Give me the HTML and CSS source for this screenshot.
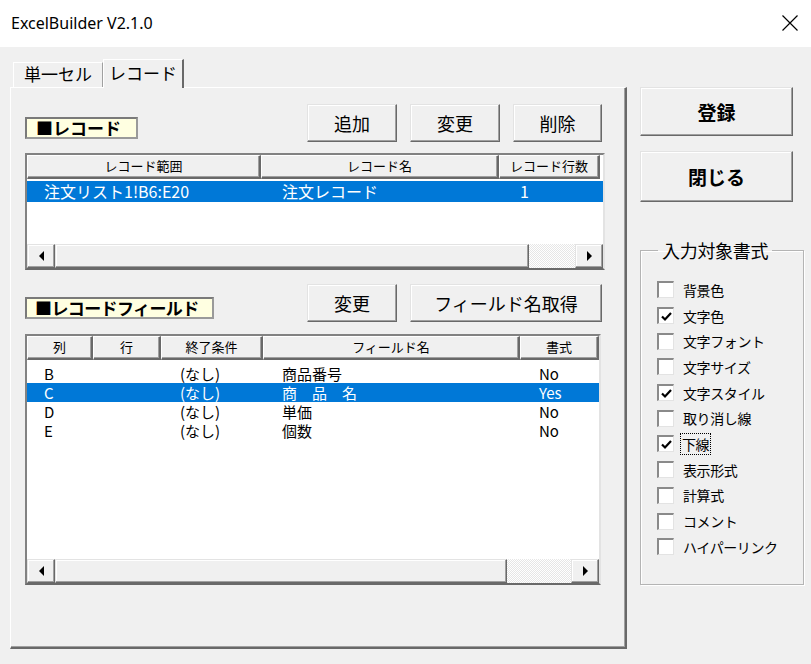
FILE: index.html
```html
<!DOCTYPE html>
<html>
  <head>
    <meta charset="utf-8">
    <title>ExcelBuilder V2.1.0</title>
    <link rel="stylesheet" href="styles.css">
  </head>
  <body>
    <div class="titlebar">
      <span class="title">ExcelBuilder V2.1.0</span>
      <svg class="close" width="16" height="16" viewBox="0 0 16 16">
        <path d="M0.5 0.5 L15.5 15.5 M15.5 0.5 L0.5 15.5" stroke="#000" stroke-width="1.2" fill="none"/>
      </svg>
    </div>
    <div class="client">
      <div class="left">
        <div class="tabs">
          <div class="tab">単一セル</div>
          <div class="tab active">レコード</div>
        </div>
        <div class="panel">
          <div class="sec-head">
            <div class="sec-label">■レコード</div>
            <div class="btns">
              <button class="btn w90">追加</button>
              <button class="btn w90">変更</button>
              <button class="btn w89">削除</button>
            </div>
          </div>
          <div class="list list-rec">
            <div class="lv-head">
              <div class="hd">レコード範囲</div>
              <div class="hd">レコード名</div>
              <div class="hd">レコード行数</div>
            </div>
            <div class="lv-body">
              <div class="lv-row sel">
                <div class="cell">注文リスト1!B6:E20</div>
                <div class="cell">注文レコード</div>
                <div class="cell">1</div>
              </div>
            </div>
            <div class="hscroll">
              <div class="sb-btn"><span class="arr-l"></span></div>
              <div class="sb-thumb"></div>
              <div class="sb-track"></div>
              <div class="sb-btn"><span class="arr-r"></span></div>
            </div>
          </div>

          <div class="sec-head sec2">
            <div class="sec-label wide">■レコードフィールド</div>
            <div class="btns">
              <button class="btn w90">変更</button>
              <button class="btn w192">フィールド名取得</button>
            </div>
          </div>
          <div class="list list-fld">
            <div class="lv-head">
              <div class="hd">列</div>
              <div class="hd">行</div>
              <div class="hd">終了条件</div>
              <div class="hd">フィールド名</div>
              <div class="hd">書式</div>
            </div>
            <div class="lv-body">
              <div class="lv-row">
                <div class="cell">B</div>
                <div class="cell"></div>
                <div class="cell">(なし)</div>
                <div class="cell">商品番号</div>
                <div class="cell">No</div>
              </div>
              <div class="lv-row sel">
                <div class="cell">C</div>
                <div class="cell"></div>
                <div class="cell">(なし)</div>
                <div class="cell">商　品　名</div>
                <div class="cell">Yes</div>
              </div>
              <div class="lv-row">
                <div class="cell">D</div>
                <div class="cell"></div>
                <div class="cell">(なし)</div>
                <div class="cell">単価</div>
                <div class="cell">No</div>
              </div>
              <div class="lv-row">
                <div class="cell">E</div>
                <div class="cell"></div>
                <div class="cell">(なし)</div>
                <div class="cell">個数</div>
                <div class="cell">No</div>
              </div>
            </div>
            <div class="hscroll">
              <div class="sb-btn"><span class="arr-l"></span></div>
              <div class="sb-thumb"></div>
              <div class="sb-track"></div>
              <div class="sb-btn"><span class="arr-r"></span></div>
            </div>
          </div>
        </div>
      </div>

      <div class="right">
        <button class="btn big">登録</button>
        <button class="btn big close-btn">閉じる</button>
        <fieldset class="group">
          <legend>入力対象書式</legend>
          <div class="checks">
            <div class="chk"><span class="box"></span><span>背景色</span></div>
            <div class="chk"><span class="box"><svg width="13" height="13" viewBox="0 0 13 13"><path d="M2 6.5 L5 9.5 L11 3" stroke="#000" stroke-width="2.2" fill="none"/></svg></span><span>文字色</span></div>
            <div class="chk"><span class="box"></span><span>文字フォント</span></div>
            <div class="chk"><span class="box"></span><span>文字サイズ</span></div>
            <div class="chk"><span class="box"><svg width="13" height="13" viewBox="0 0 13 13"><path d="M2 6.5 L5 9.5 L11 3" stroke="#000" stroke-width="2.2" fill="none"/></svg></span><span>文字スタイル</span></div>
            <div class="chk"><span class="box"></span><span>取り消し線</span></div>
            <div class="chk"><span class="box"><svg width="13" height="13" viewBox="0 0 13 13"><path d="M2 6.5 L5 9.5 L11 3" stroke="#000" stroke-width="2.2" fill="none"/></svg></span><span class="focus">下線</span></div>
            <div class="chk"><span class="box"></span><span>表示形式</span></div>
            <div class="chk"><span class="box"></span><span>計算式</span></div>
            <div class="chk"><span class="box"></span><span>コメント</span></div>
            <div class="chk"><span class="box"></span><span>ハイパーリンク</span></div>
          </div>
        </fieldset>
      </div>
    </div>
  </body>
</html>
```

FILE: styles.css
```css
* {
    box-sizing: border-box;
}

body {
    margin: 0;
    width: 811px;
    height: 664px;
    overflow: hidden;
    background-color: #f0f0f0;
    font-family: "Noto Sans CJK JP", sans-serif;
    color: #000;
}

.titlebar {
    height: 47px;
    background-color: #fff;
    display: flex;
    align-items: center;
    justify-content: space-between;
    padding: 0 12px 2px 11px;
}
.title {
    font-family: "Noto Sans", sans-serif;
    font-size: 16px;
}
.close {
    margin-right: 1px;
}

.client {
    display: flex;
    padding-top: 12px;
}
.left {
    width: 617px;
    margin-left: 10px;
}

.tabs {
    display: flex;
    height: 28px;
    align-items: flex-end;
}
.tab {
    font-size: 17px;
    line-height: 22px;
    height: 25px;
    width: 90px;
    margin-left: 3px;
    text-align: center;
    background-color: #f0f0f0;
    border-top: 1px solid #fff;
    border-left: 1px solid #fff;
    border-right: 1px solid #a0a0a0;
}
.tab.active {
    width: 81px;
    height: 29px;
    margin-left: 0;
    margin-bottom: -1px;
    padding-top: 2px;
    position: relative;
    z-index: 1;
    border-right: 2px solid #696969;
}

.panel {
    height: 562px;
    border-top: 1px solid #fff;
    border-left: 1px solid #fff;
    border-right: 2px solid #696969;
    border-bottom: 2px solid #696969;
    box-shadow: inset -1px -1px #a0a0a0;
    padding: 16px 20px 0 14px;
}

.sec-head {
    display: flex;
    justify-content: space-between;
    align-items: flex-start;
    height: 38px;
    padding-right: 3px;
}
.sec2 {
    margin-top: 14px;
}
.sec-label {
    margin-top: 13px;
    width: 113px;
    height: 22px;
    display: flex;
    align-items: center;
    background-color: #ffffe1;
    border: 2px solid #9a9a9a;
    border-top-color: #7a7a7a;
    border-left-color: #7a7a7a;
    font-size: 17px;
    font-weight: bold;
    line-height: 18px;
    padding-left: 9px;
    white-space: nowrap;
}
.sec-label.wide {
    width: 189px;
    padding-left: 8px;
    letter-spacing: -0.6px;
}
.btns {
    display: flex;
    gap: 13px;
}

.btn {
    font-family: "Noto Sans CJK JP", sans-serif;
    font-size: 18px;
    height: 38px;
    padding: 0;
    background-color: #f0f0f0;
    color: #000;
    border: 1px solid;
    border-color: #e3e3e3 #696969 #696969 #e3e3e3;
    box-shadow: inset -1px -1px #a0a0a0, inset 1px 1px #fff;
}
.w90 { width: 90px; }
.w89 { width: 89px; }
.w192 { width: 192px; }

.list {
    display: flex;
    flex-direction: column;
    background-color: #fff;
    border: 2px solid #828282;
    border-right-color: #e3e3e3;
    border-bottom-color: #696969;
    overflow: hidden;
}
.list-rec {
    margin-top: 11px;
    width: 580px;
    height: 117px;
}
.list-fld {
    margin-top: 12px;
    width: 576px;
    height: 251px;
}

.lv-head, .lv-row {
    display: grid;
}
.list-rec .lv-head, .list-rec .lv-row {
    grid-template-columns: 234px 238px 101px 1fr;
}
.list-fld .lv-head, .list-fld .lv-row {
    grid-template-columns: 66px 68px 102px 257px 1fr;
}
.lv-head {
    height: 24px;
    background-color: #fff;
}
.hd {
    font-size: 13px;
    line-height: 19px;
    text-align: center;
    background-color: #f0f0f0;
    border-top: 1px solid #fff;
    border-left: 1px solid #fff;
    border-right: 2px solid #696969;
    border-bottom: 2px solid #696969;
    box-shadow: inset -1px -1px #a0a0a0;
}

.lv-body {
    flex: 1;
    padding-top: 2px;
}
.list-fld .lv-body {
    padding-top: 4px;
}
.lv-row {
    font-size: 16px;
    height: 21px;
    line-height: 21px;
}
.list-fld .lv-row {
    font-size: 15px;
    height: 19px;
    line-height: 19px;
}
.lv-row.sel {
    background-color: #0078d7;
    color: #fff;
}
.cell {
    padding-left: 17px;
    white-space: nowrap;
}
.list-rec .cell + .cell {
    padding-left: 21px;
}
.list-fld .cell + .cell {
    padding-left: 19px;
}

.hscroll {
    display: flex;
    height: 24px;
    background-color: #f0f0f0;
}
.sb-btn {
    width: 28px;
    display: flex;
    align-items: center;
    justify-content: center;
    background-color: #f0f0f0;
    border-top: 1px solid #e3e3e3;
    border-left: 1px solid #e3e3e3;
    border-right: 1px solid #696969;
    border-bottom: 1px solid #696969;
    box-shadow: inset -1px -1px #a0a0a0, inset 1px 1px #fff;
}
.sb-thumb {
    flex: 1;
    background-color: #f0f0f0;
    border-top: 1px solid #e3e3e3;
    border-left: 1px solid #e3e3e3;
    border-right: 1px solid #696969;
    border-bottom: 1px solid #696969;
    box-shadow: inset -1px -1px #a0a0a0, inset 1px 1px #fff;
}
.sb-track {
    background: repeating-conic-gradient(#e6e6e6 0 25%, #fff 0 50%) 0 0 / 2px 2px;
}
.list-rec .sb-track { width: 46px; }
.list-fld .sb-track { width: 64px; }
.arr-l {
    border-top: 5px solid transparent;
    border-bottom: 5px solid transparent;
    border-right: 5px solid #000;
}
.arr-r {
    border-top: 5px solid transparent;
    border-bottom: 5px solid transparent;
    border-left: 5px solid #000;
}

.right {
    width: 164px;
    margin-left: 13px;
    padding-top: 28px;
    display: flex;
    flex-direction: column;
}
.btn.big {
    width: 153px;
    height: 49px;
    font-size: 19px;
    font-weight: bold;
}
.btn.close-btn {
    height: 51px;
    margin-top: 15px;
}

.group {
    margin: 35px 0 0 0;
    height: 348px;
    width: 164px;
    padding: 14px 0 0 16px;
    border: 1px solid #b4b4b4;
    box-shadow: 1px 1px #fff, inset 1px 1px #fff;
}
.group legend {
    font-size: 18px;
    line-height: 26px;
    margin-left: 1px;
    padding: 0 4px;
    letter-spacing: -0.3px;
}
.checks {
    display: flex;
    flex-direction: column;
}
.chk {
    display: flex;
    align-items: center;
    height: 25.7px;
    font-size: 14px;
    letter-spacing: -0.4px;
}
.box {
    width: 17px;
    height: 17px;
    margin-right: 9px;
    background-color: #fff;
    border-top: 2px solid #8a8a8a;
    border-left: 2px solid #8a8a8a;
    border-right: 1px solid #e3e3e3;
    border-bottom: 1px solid #e3e3e3;
    display: flex;
    align-items: center;
    justify-content: center;
}
.focus {
    outline: 1px dotted #000;
    outline-offset: 0;
    padding: 0 1px;
    margin-left: -2px;
}
```
